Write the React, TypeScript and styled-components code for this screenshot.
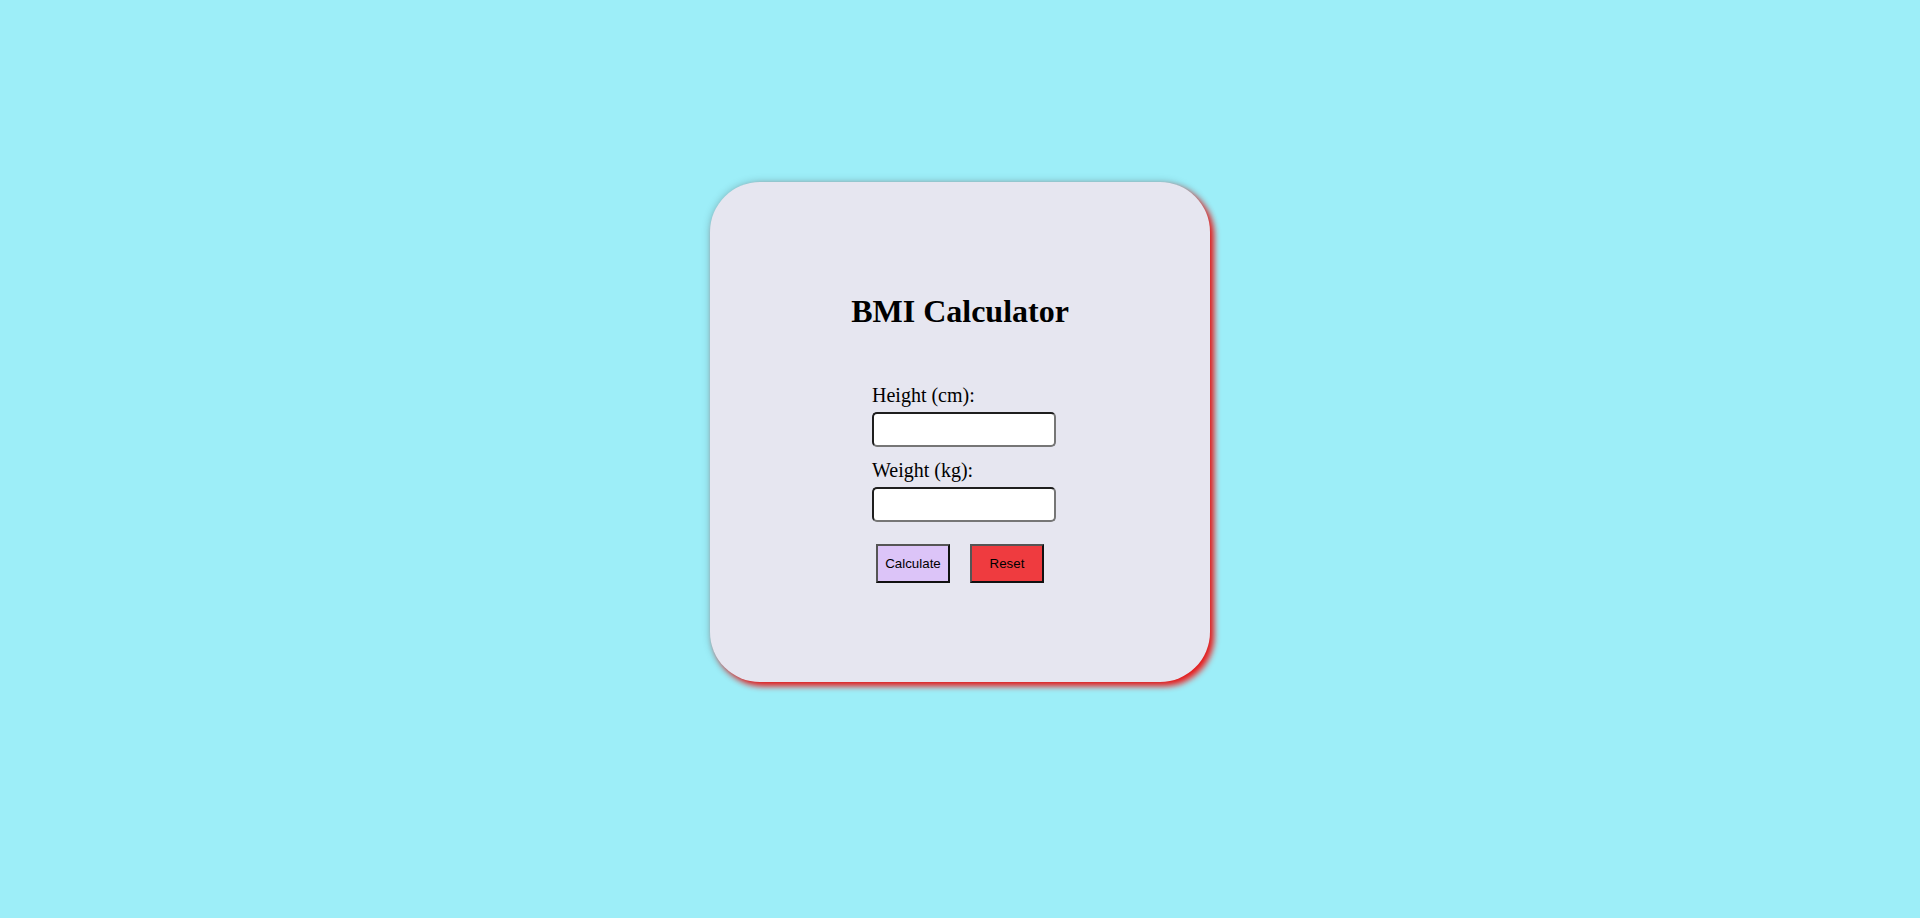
import React from "react";
import styled, { createGlobalStyle } from "styled-components";

const GlobalStyle = createGlobalStyle`
  html, body {
    margin: 0;
    padding: 0;
    background: #9deef8;
    font-family: "Liberation Serif", "Times New Roman", serif;
  }
`;

const Page = styled.div`
  min-height: 918px;
  display: flex;
  justify-content: center;
  align-items: flex-start;
  padding-top: 182px;
  box-sizing: border-box;
`;

const Card = styled.div`
  width: 500px;
  height: 500px;
  box-sizing: border-box;
  background: #e6e6f0;
  border-radius: 50px;
  box-shadow: 0 0 8px rgba(0, 0, 0, 0.22), 4px 4px 6px #ff1a1a;
  display: flex;
  flex-direction: column;
  align-items: center;
  padding-top: 112px;
`;

const Title = styled.h1`
  margin: 0;
  font-size: 32px;
  font-weight: bold;
  color: #000;
  line-height: 35px;
`;

const Form = styled.form`
  display: flex;
  flex-direction: column;
  width: 184px;
  margin-top: 55px;
  margin-left: 8px;
`;

const Label = styled.label<{ $first?: boolean }>`
  font-size: 20px;
  line-height: 22px;
  color: #000;
  margin-top: ${(p) => (p.$first ? "0" : "12px")};
`;

const Input = styled.input`
  margin-top: 6px;
  width: 184px;
  height: 35px;
  box-sizing: border-box;
  background: #fff;
  border: 2px solid;
  border-color: #1e1e1e #767676 #767676 #1e1e1e;
  border-radius: 5px;
  padding: 2px 6px;
  font-size: 16px;
  outline: none;
`;

const ButtonRow = styled.div`
  display: flex;
  gap: 20px;
  margin-top: 22px;
  padding-left: 4px;
`;

const Button = styled.button<{ $bg: string }>`
  width: 74px;
  height: 39px;
  box-sizing: border-box;
  background: ${(p) => p.$bg};
  border: 2px solid;
  border-color: #555 #111 #111 #555;
  border-radius: 0;
  font-family: "Liberation Sans", Arial, sans-serif;
  font-size: 13.33px;
  color: #000;
  padding: 0;
  cursor: pointer;
`;

export default function App() {
  return (
    <>
      <GlobalStyle />
      <Page>
        <Card>
          <Title>BMI Calculator</Title>
          <Form onSubmit={(e) => e.preventDefault()}>
            <Label $first htmlFor="h">Height (cm):</Label>
            <Input id="h" type="text" />
            <Label htmlFor="w">Weight (kg):</Label>
            <Input id="w" type="text" />
            <ButtonRow>
              <Button type="submit" $bg="#dcc4f8">Calculate</Button>
              <Button type="reset" $bg="#ef3b3f">Reset</Button>
            </ButtonRow>
          </Form>
        </Card>
      </Page>
    </>
  );
}
